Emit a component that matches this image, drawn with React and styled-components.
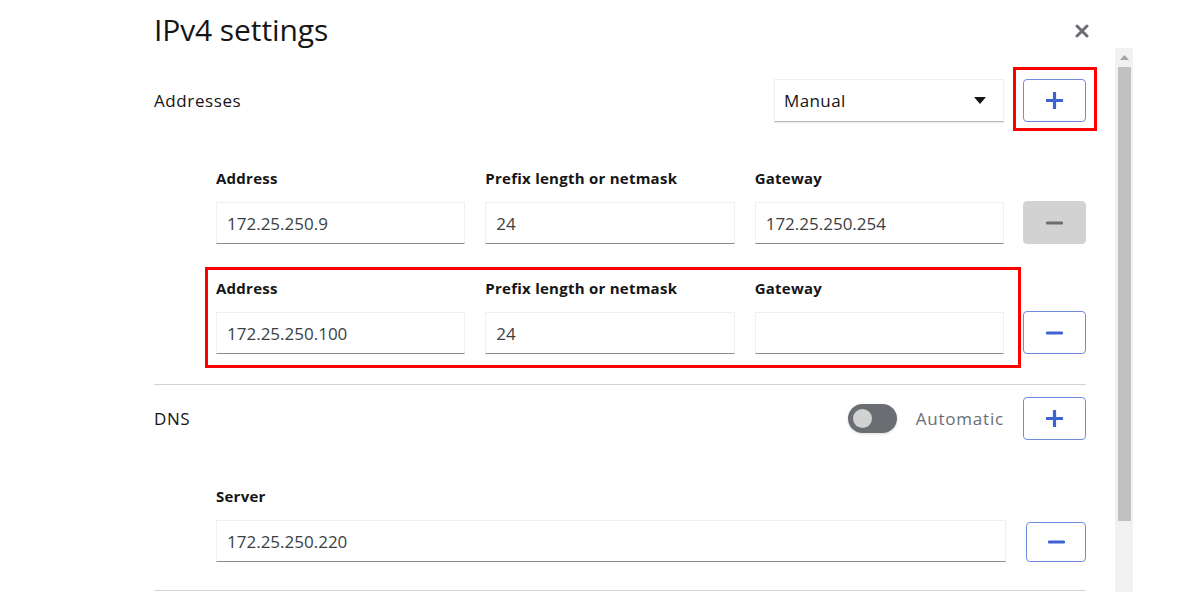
import React from "react";
import styled, { createGlobalStyle } from "styled-components";

const Global = createGlobalStyle`
  html, body { margin: 0; padding: 0; background: #fff; }
  body { font-family: "Open Sans", "Liberation Sans", sans-serif; color: #151515; overflow: hidden; }
  * { box-sizing: border-box; }
`;

const Page = styled.div`
  display: grid;
  grid-template-columns: 154px 932px 29px 18px;
  grid-template-rows: 48px 544px;
  height: 592px;
  width: 1182px;
`;

const Header = styled.header`
  grid-column: 2;
  grid-row: 1;
  display: flex;
  align-items: flex-start;
  justify-content: space-between;
  padding-top: 10px;
`;

const Title = styled.h1`
  margin: 0;
  font-size: 30px;
  font-weight: 500;
  line-height: 40px;
  letter-spacing: -0.1px;
`;

const Close = styled.button`
  border: 0;
  background: none;
  color: #6a6e73;
  padding: 0;
  margin: 13px -4px 0 0;
  width: 16px;
  height: 16px;
  display: flex;
  align-items: center;
  justify-content: center;
`;

const Body = styled.main`
  grid-column: 2;
  grid-row: 2;
  display: flex;
  flex-direction: column;
  padding-top: 31px;
`;

const SectionHead = styled.div`
  display: flex;
  align-items: center;
  height: 43px;
  gap: 20px;
`;

const SectionLabel = styled.div`
  flex: 1;
  font-size: 17px;
  letter-spacing: 0.6px;
  color: #151515;
`;

const Select = styled.div`
  width: 230px;
  height: 43px;
  margin-right: -1px;
  display: flex;
  align-items: center;
  justify-content: space-between;
  padding: 0 17px 0 9px;
  font-size: 17px;
  letter-spacing: 0.4px;
  border: 1px solid #f0f0f0;
  border-bottom-color: #b8bbbe;
  box-shadow: 0 1px 1px rgba(0, 0, 0, 0.08);
`;

const Highlight = styled.div`
  border: 3px solid #f00;
  padding: 9px 8px 6px 7px;
  margin: -12px -11px -9px -10px;
  display: flex;
`;

const IconButton = styled.button`
  width: ${(p) => p.$w || 63}px;
  height: ${(p) => p.$h || 43}px;
  flex: none;
  display: flex;
  align-items: center;
  justify-content: center;
  padding: 0;
  border-radius: 4px;
  background: ${(p) => (p.$disabled ? "#d2d2d2" : "#fff")};
  border: 1px solid ${(p) => (p.$disabled ? "#d2d2d2" : "#6f8be2")};
  color: ${(p) => (p.$disabled ? "#6a6e73" : "#3e62d1")};
  justify-self: end;
`;

const Rows = styled.div`
  display: flex;
  flex-direction: column;
  gap: 34px;
  padding: 46px 0 0 62px;
`;

const FieldRow = styled.div`
  display: grid;
  grid-template-columns: 1fr ${(p) => p.$btn || 63}px;
  column-gap: ${(p) => p.$gap || 19}px;
  align-items: end;
`;

const Fields = styled.div`
  position: relative;
  display: grid;
  grid-template-columns: repeat(${(p) => p.$n || 3}, 1fr);
  column-gap: 20px;
`;

const Mark = styled.div`
  position: absolute;
  left: -11px;
  right: -17px;
  top: -11px;
  bottom: -14px;
  border: 3px solid #f00;
  pointer-events: none;
`;

const Field = styled.div`
  display: flex;
  flex-direction: column;
  gap: 14px;
`;

const Label = styled.label`
  font-size: 15px;
  font-weight: 700;
  line-height: 20px;
  letter-spacing: 0.25px;
  color: #151515;
`;

const Input = styled.div`
  height: 42px;
  display: flex;
  align-items: center;
  padding: 0 10px;
  font-size: 17px;
  color: #3c3f42;
  border: 1px solid #f0f0f0;
  border-bottom: 1px solid #8a8d90;
  background: #fff;
`;

const Divider = styled.hr`
  margin: ${(p) => p.$m || "0"};
  border: 0;
  border-top: 1px solid #d2d2d2;
  height: 0;
`;

const Switch = styled.div`
  width: 49px;
  height: 29px;
  border-radius: 15px;
  background: #6a6e73;
  display: flex;
  align-items: center;
  padding-left: 5px;
  box-shadow: 0 1px 3px rgba(0, 0, 0, 0.15);
  &::before {
    content: "";
    width: 19px;
    height: 19px;
    border-radius: 50%;
    background: #d2d2d2;
  }
`;

const SwitchText = styled.span`
  font-size: 17px;
  letter-spacing: 0.8px;
  color: #6a6e73;
  margin-left: -1px;
  margin-right: -1px;
`;

const Rail = styled.div`
  grid-column: 4;
  grid-row: 2;
  background: #f1f1f1;
  display: flex;
  flex-direction: column;
  align-items: center;
`;

const RailArrow = styled.div`
  height: 19px;
  display: flex;
  align-items: center;
  justify-content: center;
`;

const Thumb = styled.div`
  width: 13px;
  height: 454px;
  background: #c1c1c1;
`;

const Plus = () => (
  <svg width="17" height="17" viewBox="0 0 17 17">
    <path d="M8.5 1v15M1 8.5h15" stroke="currentColor" strokeWidth="3.2" strokeLinecap="round" />
  </svg>
);

const Minus = () => (
  <svg width="17" height="6" viewBox="0 0 17 6">
    <path d="M1.5 3h14" stroke="currentColor" strokeWidth="3.2" strokeLinecap="round" />
  </svg>
);

const Caret = () => (
  <svg width="12" height="7" viewBox="0 0 12 7">
    <path d="M0 0h12L6 7z" fill="#151515" />
  </svg>
);

const Times = () => (
  <svg width="14" height="14" viewBox="0 0 14 14">
    <path d="M2 2l10 10M12 2L2 12" stroke="currentColor" strokeWidth="3" strokeLinecap="round" />
  </svg>
);

const addresses = [
  { address: "172.25.250.9", prefix: "24", gateway: "172.25.250.254", disabled: true },
  { address: "172.25.250.100", prefix: "24", gateway: "", marked: true },
];

export default function App() {
  return (
    <>
      <Global />
      <Page>
        <Header>
          <Title>IPv4 settings</Title>
          <Close aria-label="Close">
            <Times />
          </Close>
        </Header>
        <Body>
          <SectionHead>
            <SectionLabel>Addresses</SectionLabel>
            <Select>
              <span>Manual</span>
              <Caret />
            </Select>
            <Highlight>
              <IconButton>
                <Plus />
              </IconButton>
            </Highlight>
          </SectionHead>
          <Rows>
            {addresses.map((a, i) => (
              <FieldRow key={i}>
                <Fields>
                  {a.marked && <Mark />}
                  <Field>
                    <Label>Address</Label>
                    <Input>{a.address}</Input>
                  </Field>
                  <Field>
                    <Label>Prefix length or netmask</Label>
                    <Input>{a.prefix}</Input>
                  </Field>
                  <Field>
                    <Label>Gateway</Label>
                    <Input>{a.gateway}</Input>
                  </Field>
                </Fields>
                <IconButton $disabled={a.disabled}>
                  <Minus />
                </IconButton>
              </FieldRow>
            ))}
          </Rows>
          <Divider $m="30px 0 12px" />
          <SectionHead>
            <SectionLabel>DNS</SectionLabel>
            <Switch />
            <SwitchText>Automatic</SwitchText>
            <IconButton>
              <Plus />
            </IconButton>
          </SectionHead>
          <Rows>
            <FieldRow $btn={60} $gap={20}>
              <Fields $n={1}>
                <Field>
                  <Label>Server</Label>
                  <Input>172.25.250.220</Input>
                </Field>
              </Fields>
              <IconButton $w={60} $h={40}>
                <Minus />
              </IconButton>
            </FieldRow>
          </Rows>
          <Divider $m="28px 0 0" />
        </Body>
        <Rail>
          <RailArrow>
            <svg width="9" height="5" viewBox="0 0 9 5">
              <path d="M0 5h9L4.5 0z" fill="#a3a3a3" />
            </svg>
          </RailArrow>
          <Thumb />
        </Rail>
      </Page>
    </>
  );
}
